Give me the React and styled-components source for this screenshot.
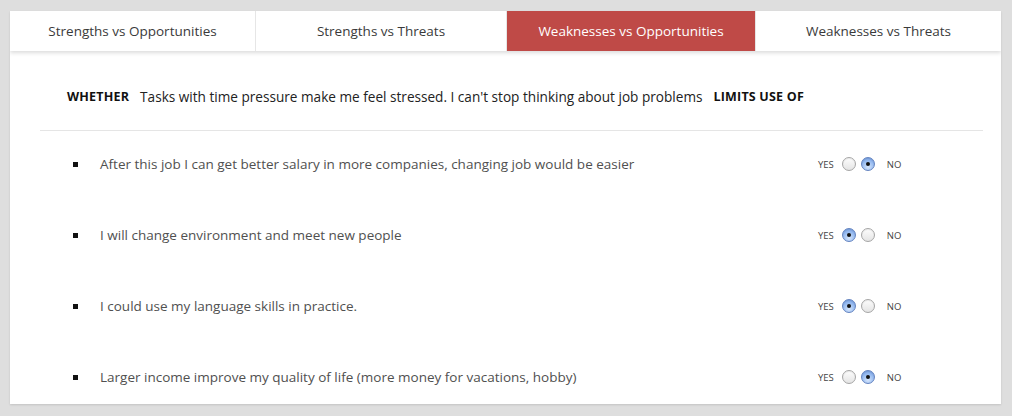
import * as React from "react";
import styled, { createGlobalStyle } from "styled-components";

const tabs = [
  "Strengths vs Opportunities",
  "Strengths vs Threats",
  "Weaknesses vs Opportunities",
  "Weaknesses vs Threats",
];

const items = [
  { text: "After this job I can get better salary in more companies, changing job would be easier", yes: false },
  { text: "I will change environment and meet new people", yes: true },
  { text: "I could use my language skills in practice.", yes: true },
  { text: "Larger income improve my quality of life (more money for vacations, hobby)", yes: false },
];

function App() {
  return (
    <>
      <GlobalStyle />
      <Page>
        <Card>
          <TabBar>
            {tabs.map((t, i) => (
              <Tab key={t} active={i === 2}>
                {t}
              </Tab>
            ))}
          </TabBar>
          <Header>
            <Keyword>WHETHER</Keyword>
            <Statement>
              Tasks with time pressure make me feel stressed. I can't stop thinking about job problems
            </Statement>
            <Keyword>LIMITS USE OF</Keyword>
          </Header>
          <List>
            {items.map((it) => (
              <Item key={it.text}>
                <ItemText>{it.text}</ItemText>
                <Choice>
                  <ChoiceLabel>YES</ChoiceLabel>
                  <Radio checked={it.yes} />
                  <Radio checked={!it.yes} />
                  <ChoiceLabel last>NO</ChoiceLabel>
                </Choice>
              </Item>
            ))}
          </List>
        </Card>
      </Page>
    </>
  );
}

const GlobalStyle = createGlobalStyle`
  body {
    margin: 0;
    background: #dedede;
    font-family: "Open Sans", "Liberation Sans", sans-serif;
  }
`;

const Page = styled.div`
  padding: 11px 11px 12px 10px;
`;

const Card = styled.div`
  background: #fff;
  box-shadow: 0 1px 2px rgba(0, 0, 0, 0.12);
  height: 393px;
  overflow: hidden;
`;

const TabBar = styled.div`
  display: grid;
  grid-template-columns: 245px 251px 249px 1fr;
  height: 40px;
  box-shadow: 0 2px 4px rgba(0, 0, 0, 0.14);
  position: relative;
`;

const Tab = styled.div`
  display: flex;
  align-items: center;
  justify-content: center;
  font-size: 13.5px;
  color: ${(p) => (p.active ? "#fff" : "#3a3a3a")};
  background: ${(p) => (p.active ? "#bf4a47" : "#fff")};
  border-left: 1px solid #e6e6e6;
  &:first-child {
    border-left: none;
  }
`;

const Header = styled.div`
  display: flex;
  align-items: center;
  gap: 11px;
  height: 67px;
  padding-top: 12px;
  margin: 0 18px 0 30px;
  padding-left: 27px;
  border-bottom: 1px solid #e5e5e5;
`;

const Keyword = styled.span`
  font-size: 12.5px;
  font-weight: 700;
  letter-spacing: 0.2px;
  color: #111;
`;

const Statement = styled.span`
  font-size: 13.6px;
  color: #222;
`;

const List = styled.ul`
  list-style: none;
  margin: 0;
  padding: 23px 0 0 63px;
  display: flex;
  flex-direction: column;
  gap: 51px;
`;

const Item = styled.li`
  display: flex;
  align-items: center;
  height: 20px;
  &::before {
    content: "";
    width: 5px;
    height: 5px;
    background: #111;
    margin-right: 22px;
    flex: none;
  }
`;

const ItemText = styled.span`
  flex: 1;
  font-size: 13.5px;
  color: #505050;
`;

const Choice = styled.div`
  display: flex;
  align-items: center;
  width: 183px;
`;

const ChoiceLabel = styled.span`
  font-size: 9.5px;
  color: #444;
  margin: ${(p) => (p.last ? "0 0 0 7px" : "0 8px 0 0")};
`;

const Radio = styled.span`
  width: 14px;
  height: 14px;
  border-radius: 50%;
  margin-right: 5px;
  box-sizing: border-box;
  position: relative;
  border: 1px solid ${(p) => (p.checked ? "#6383c0" : "#a5a5a5")};
  background: ${(p) =>
    p.checked
      ? "radial-gradient(circle at 50% 75%, #d6e6fc 0%, #97bbf0 55%, #6f9ae0 100%)"
      : "linear-gradient(#fdfdfd, #e4e4e4)"};
  box-shadow: inset 0 1px 1px rgba(0, 0, 0, 0.08);
  &:last-of-type {
    margin-right: 0;
  }
  &::after {
    content: "";
    display: ${(p) => (p.checked ? "block" : "none")};
    position: absolute;
    width: 4px;
    height: 4px;
    border-radius: 50%;
    background: #111;
    left: 50%;
    top: 50%;
    transform: translate(-50%, -50%);
  }
`;

export default App;
